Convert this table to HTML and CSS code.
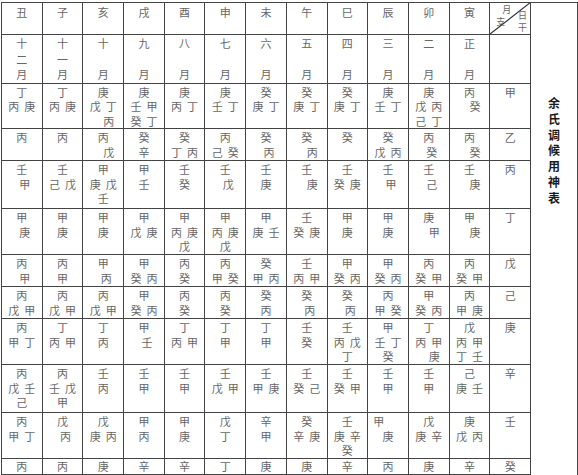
FILE: index.html
```html
<!DOCTYPE html>
<html lang="zh">
<head>
<meta charset="utf-8">
<title>余氏调候用神表</title>
<link rel="stylesheet" href="styles.css">
</head>
<body>
<div class="page">
<table class="grid">
<colgroup>
<col><col><col><col><col><col><col><col><col><col><col><col><col>
</colgroup>
<tr class="h31 head">
<td>丑</td><td>子</td><td>亥</td><td>戌</td><td>酉</td><td>申</td><td>未</td><td>午</td><td>巳</td><td>辰</td><td>卯</td><td>寅</td>
<td class="diag">
<svg class="slash" viewBox="0 0 40 31" preserveAspectRatio="none"><line x1="0" y1="31" x2="40" y2="0" stroke="#333" stroke-width="1.2"/></svg>
<div class="diag-in">
<div class="dl"><span class="d1">月</span><span>支</span></div>
<div class="dr"><span>日</span><span>干</span></div>
</div>
</td>
</tr>
<tr class="h48 mon">
<td><div>十</div><div>二</div><div>月</div></td>
<td><div>十</div><div>一</div><div>月</div></td>
<td><div>十</div><div>&nbsp;</div><div>月</div></td>
<td><div>九</div><div>&nbsp;</div><div>月</div></td>
<td><div>八</div><div>&nbsp;</div><div>月</div></td>
<td><div>七</div><div>&nbsp;</div><div>月</div></td>
<td><div>六</div><div>&nbsp;</div><div>月</div></td>
<td><div>五</div><div>&nbsp;</div><div>月</div></td>
<td><div>四</div><div>&nbsp;</div><div>月</div></td>
<td><div>三</div><div>&nbsp;</div><div>月</div></td>
<td><div>二</div><div>&nbsp;</div><div>月</div></td>
<td><div>正</div><div>&nbsp;</div><div>月</div></td>
<td></td>
</tr>
<tr class="h45">
<td><div>丁</div><div>丙 庚</div></td>
<td><div>丁</div><div>丙 庚</div></td>
<td><div>庚</div><div>戊 丁</div><div class="s5">丙</div></td>
<td><div>庚</div><div>壬 甲</div><div>癸 丁</div></td>
<td><div>庚</div><div>丙 丁</div></td>
<td><div>庚</div><div>壬 丁</div></td>
<td><div>癸</div><div>庚 丁</div></td>
<td><div>癸</div><div>庚 丁</div></td>
<td><div>癸</div><div>庚 丁</div></td>
<td><div>庚</div><div>壬 丁</div></td>
<td><div>庚</div><div>戊 丙</div><div>己 丁</div></td>
<td><div>丙</div><div class="s5">癸</div></td>
<td><div>甲</div></td>
</tr>
<tr class="h32">
<td><div>丙</div></td>
<td><div>丙</div></td>
<td><div>丙</div><div class="s5">戊</div></td>
<td><div>癸</div><div>辛</div></td>
<td><div>癸</div><div>丁 丙</div></td>
<td><div>丙</div><div>己 癸</div></td>
<td><div>癸</div><div class="s3">丙</div></td>
<td><div>癸</div><div class="s5">丙</div></td>
<td><div>癸</div></td>
<td><div>癸</div><div>戊 丙</div></td>
<td><div>丙</div><div class="s3">癸</div></td>
<td><div>丙</div><div class="s5">癸</div></td>
<td><div>乙</div></td>
</tr>
<tr class="h48">
<td><div>壬</div><div class="s3">甲</div></td>
<td><div>壬</div><div>己 戊</div></td>
<td><div>甲</div><div>庚 戊</div><div>壬</div></td>
<td><div>甲</div><div>壬</div></td>
<td><div>壬</div><div>癸</div></td>
<td><div>壬</div><div class="s3">戊</div></td>
<td><div>壬</div><div>庚</div></td>
<td><div>壬</div><div class="s5">庚</div></td>
<td><div>壬</div><div>癸 庚</div></td>
<td><div>壬</div><div class="s3">甲</div></td>
<td><div>壬</div><div class="s3">己</div></td>
<td><div>壬</div><div class="s5">庚</div></td>
<td><div>丙</div></td>
</tr>
<tr class="h46">
<td><div>甲</div><div class="s3">庚</div></td>
<td><div>甲</div><div>庚</div></td>
<td><div>甲</div><div>庚</div></td>
<td><div>甲</div><div>戊 庚</div></td>
<td><div>甲</div><div>丙 庚</div><div>戊</div></td>
<td><div>甲</div><div>丙 庚</div><div>戊</div></td>
<td><div>甲</div><div>庚 壬</div></td>
<td><div>壬</div><div>癸 庚</div></td>
<td><div>甲</div><div>庚</div></td>
<td><div>甲</div><div>庚</div></td>
<td><div>庚</div><div class="s5">甲</div></td>
<td><div>甲</div><div class="s5">庚</div></td>
<td><div>丁</div></td>
</tr>
<tr class="h32">
<td><div>丙</div><div class="s3">甲</div></td>
<td><div>丙</div><div>甲</div></td>
<td><div>甲</div><div class="s3">丙</div></td>
<td><div>甲</div><div>癸 丙</div></td>
<td><div>丙</div><div>癸</div></td>
<td><div>丙</div><div>甲 癸</div></td>
<td><div>癸</div><div>甲 丙</div></td>
<td><div>壬</div><div>丙 甲</div></td>
<td><div>甲</div><div>癸 丙</div></td>
<td><div>甲</div><div>癸 丙</div></td>
<td><div>丙</div><div>癸 甲</div></td>
<td><div>丙</div><div>癸 甲</div></td>
<td><div>戊</div></td>
</tr>
<tr class="h32">
<td><div>丙</div><div>戊 甲</div></td>
<td><div>丙</div><div>戊 甲</div></td>
<td><div>丙</div><div>戊 甲</div></td>
<td><div>甲</div><div>癸 丙</div></td>
<td><div>丙</div><div>癸</div></td>
<td><div>丙</div><div>癸</div></td>
<td><div>癸</div><div>丙</div></td>
<td><div>癸</div><div class="s3">丙</div></td>
<td><div>癸</div><div class="s3">丙</div></td>
<td><div>丙</div><div>甲 癸</div></td>
<td><div>甲</div><div>癸 丙</div></td>
<td><div>丙</div><div>甲 庚</div></td>
<td><div>己</div></td>
</tr>
<tr class="h46">
<td><div>丙</div><div>甲 丁</div></td>
<td><div>丁</div><div>丙 甲</div></td>
<td><div>丁</div><div>丙</div></td>
<td><div>甲</div><div class="s3">壬</div></td>
<td><div>丁</div><div>丙 甲</div></td>
<td><div>丁</div><div>甲</div></td>
<td><div>丁</div><div>甲</div></td>
<td><div>壬</div><div>癸</div></td>
<td><div>壬</div><div>丙 戊</div><div>丁</div></td>
<td><div>甲</div><div>壬 丁</div><div>癸</div></td>
<td><div>丁</div><div>丙 甲</div><div class="s5">庚</div></td>
<td><div>戊</div><div>丙 甲</div><div>丁 壬</div></td>
<td><div>庚</div></td>
</tr>
<tr class="h48">
<td><div>丙</div><div>戊 壬</div><div>己</div></td>
<td><div>丙</div><div>壬 戊</div><div>甲</div></td>
<td><div>壬</div><div>丙</div></td>
<td><div>壬</div><div>甲</div></td>
<td><div>壬</div><div>甲</div></td>
<td><div>壬</div><div>戊 甲</div></td>
<td><div>壬</div><div>甲 庚</div></td>
<td><div>壬</div><div>癸 己</div></td>
<td><div>壬</div><div>癸 甲</div></td>
<td><div>壬</div><div>甲</div></td>
<td><div>壬</div><div>甲</div></td>
<td><div>己</div><div>庚 壬</div></td>
<td><div>辛</div></td>
</tr>
<tr class="h46">
<td><div>丙</div><div>甲 丁</div></td>
<td><div>戊</div><div class="s3">丙</div></td>
<td><div>戊</div><div>庚 丙</div></td>
<td><div>甲</div><div>丙</div></td>
<td><div>甲</div><div>庚</div></td>
<td><div>戊</div><div>丁</div></td>
<td><div>辛</div><div>甲</div></td>
<td><div>癸</div><div>辛 庚</div></td>
<td><div>壬</div><div>庚 辛</div><div>癸</div></td>
<td><div class="lf">甲</div><div>庚</div></td>
<td><div>戊</div><div>庚 辛</div></td>
<td><div>庚</div><div>戊 丙</div></td>
<td><div>壬</div></td>
</tr>
<tr class="h16">
<td>丙</td><td>丙</td><td>庚</td><td>辛</td><td>辛</td><td>丁</td><td>庚</td><td>庚</td><td>辛</td><td>丙</td><td>庚</td><td>辛</td><td>癸</td>
</tr>
</table>
<div class="title">
<span>余</span><span>氏</span><span>调</span><span>候</span><span>用</span><span>神</span><span>表</span>
</div>
</div>
</body>
</html>
```

FILE: styles.css
```css
html, body {
  margin: 0;
  padding: 0;
  background: #ffffff;
}

body {
  font-family: "Noto Sans CJK SC", "Noto Sans CJK JP", sans-serif;
  overflow: hidden;
}

.page {
  display: flex;
  align-items: flex-start;
  padding: 2px 0 0 1px;
}

.grid {
  border-collapse: collapse;
  table-layout: fixed;
  width: 530px;
}

.grid col {
  width: 40.7px;
}

.grid td {
  border: 1px solid #444444;
  padding: 1px 0 0 0;
  vertical-align: top;
  text-align: center;
  font-size: 11px;
  line-height: 14.5px;
  color: #666666;
  word-spacing: 2.5px;
  white-space: nowrap;
}

.grid .mon td {
  line-height: 15.5px;
}

.grid .head td {
  padding-top: 2px;
}

.grid .h16 td {
  padding-top: 0;
  vertical-align: middle;
}

.h31 { height: 31px; }
.h48 { height: 48px; }
.h45 { height: 45px; }
.h46 { height: 46px; }
.h32 { height: 32px; }
.h16 { height: 16px; }

.s3 { padding-left: 6px; }
.s5 { padding-left: 11px; }
.lf { text-align: left; padding-left: 5px; }

.diag {
  position: relative;
  padding: 0 !important;
}

.slash {
  position: absolute;
  left: 0;
  top: 0;
  width: 100%;
  height: 100%;
}

.diag-in {
  display: flex;
  justify-content: space-between;
  font-size: 9px;
  line-height: 11.5px;
  height: 31px;
  padding: 1px 3px 0 6px;
  box-sizing: border-box;
}

.dl {
  display: flex;
  flex-direction: column;
  align-items: flex-start;
}

.dl .d1 {
  padding-left: 6px;
}

.dr {
  display: flex;
  flex-direction: column;
  justify-content: flex-end;
  padding-bottom: 1px;
}

.title {
  width: 47px;
  height: 480px;
  box-sizing: border-box;
  border-top: 1px solid #444444;
  border-right: 1px solid #444444;
  display: flex;
  flex-direction: column;
  align-items: center;
  padding-top: 92px;
  font-size: 12px;
  line-height: 15.8px;
  font-weight: 700;
  color: #1a1a1a;
}
```
